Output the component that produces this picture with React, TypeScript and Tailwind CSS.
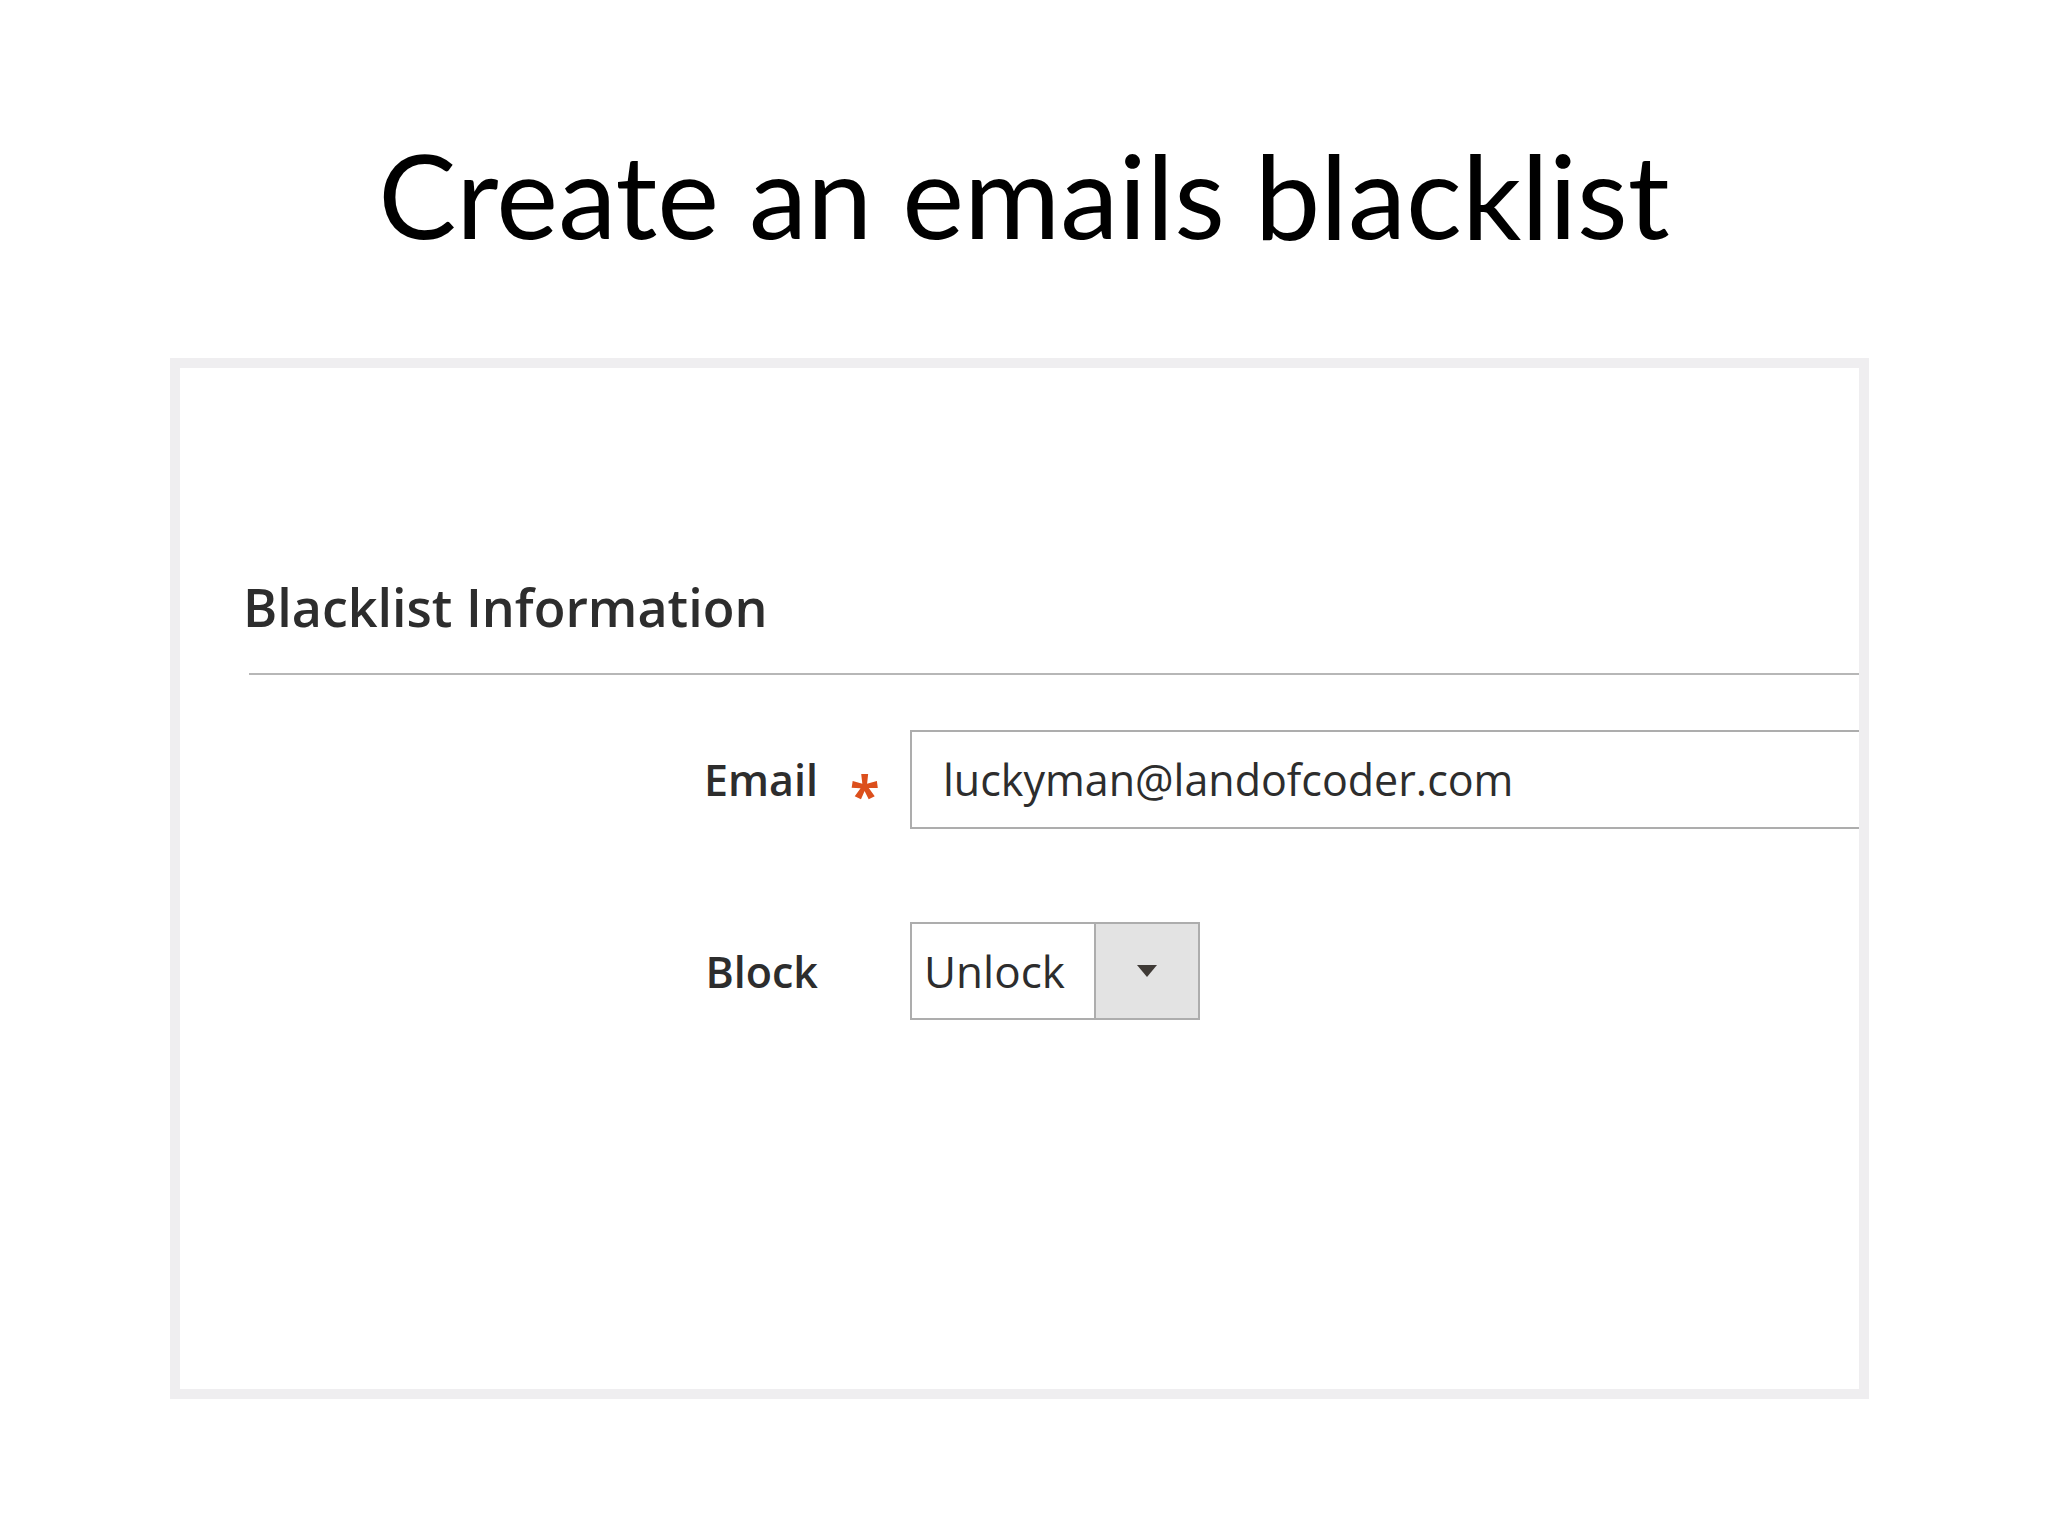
export default function App() {
  return (
    <div className="min-h-screen bg-white flex flex-col" style={{ fontFamily: '"Open Sans", "Liberation Sans", sans-serif' }}>
      <h1
        className="pt-[136px] text-center text-[117px] leading-none font-normal text-black"
        style={{ fontFamily: 'Lato, "Liberation Sans", sans-serif' }}
      >
        Create an emails blacklist
      </h1>

      <div className="mt-[105px] ml-[170px] w-[1699px] h-[1041px] border-[10px] border-[#efeef0] bg-white flex flex-col">
        <h2 className="mt-[213px] ml-[63px] text-[52px] leading-none font-semibold text-[#2d2d2d]">
          Blacklist Information
        </h2>
        <div className="mt-[40px] ml-[69px] h-[2px] bg-[#b7b7b7]" />

        {/* Email row */}
        <div className="mt-[55px] flex items-center">
          <label className="w-[638px] flex justify-end text-[43px] leading-none font-semibold text-[#2d2d2d]">
            Email
          </label>
          <div className="w-[92px] pl-[32px] pt-[28px] text-[54px] leading-none font-bold text-[#dc4f1c]">*</div>
          <div className="flex-1 h-[99px] border-2 border-r-0 border-[#adadad] bg-white flex items-center pl-[31px] text-[43px] leading-none text-[#2d2d2d]">
            luckyman@landofcoder.com
          </div>
        </div>

        {/* Block row */}
        <div className="mt-[93px] flex items-center">
          <label className="w-[638px] flex justify-end text-[43px] leading-none font-semibold text-[#2d2d2d]">
            Block
          </label>
          <div className="w-[92px]" />
          <div className="w-[290px] h-[98px] border-2 border-[#adadad] flex">
            <div className="flex-1 flex items-center pl-[12px] text-[44px] leading-none text-[#2d2d2d] bg-white">
              Unlock
            </div>
            <div className="w-[104px] border-l-2 border-[#adadad] bg-[#e3e3e3] flex items-center justify-center">
              <svg width="22" height="14" viewBox="0 0 22 14">
                <path d="M1 1 H21 L11 13 Z" fill="#3f3a36" />
              </svg>
            </div>
          </div>
        </div>
      </div>
    </div>
  );
}
